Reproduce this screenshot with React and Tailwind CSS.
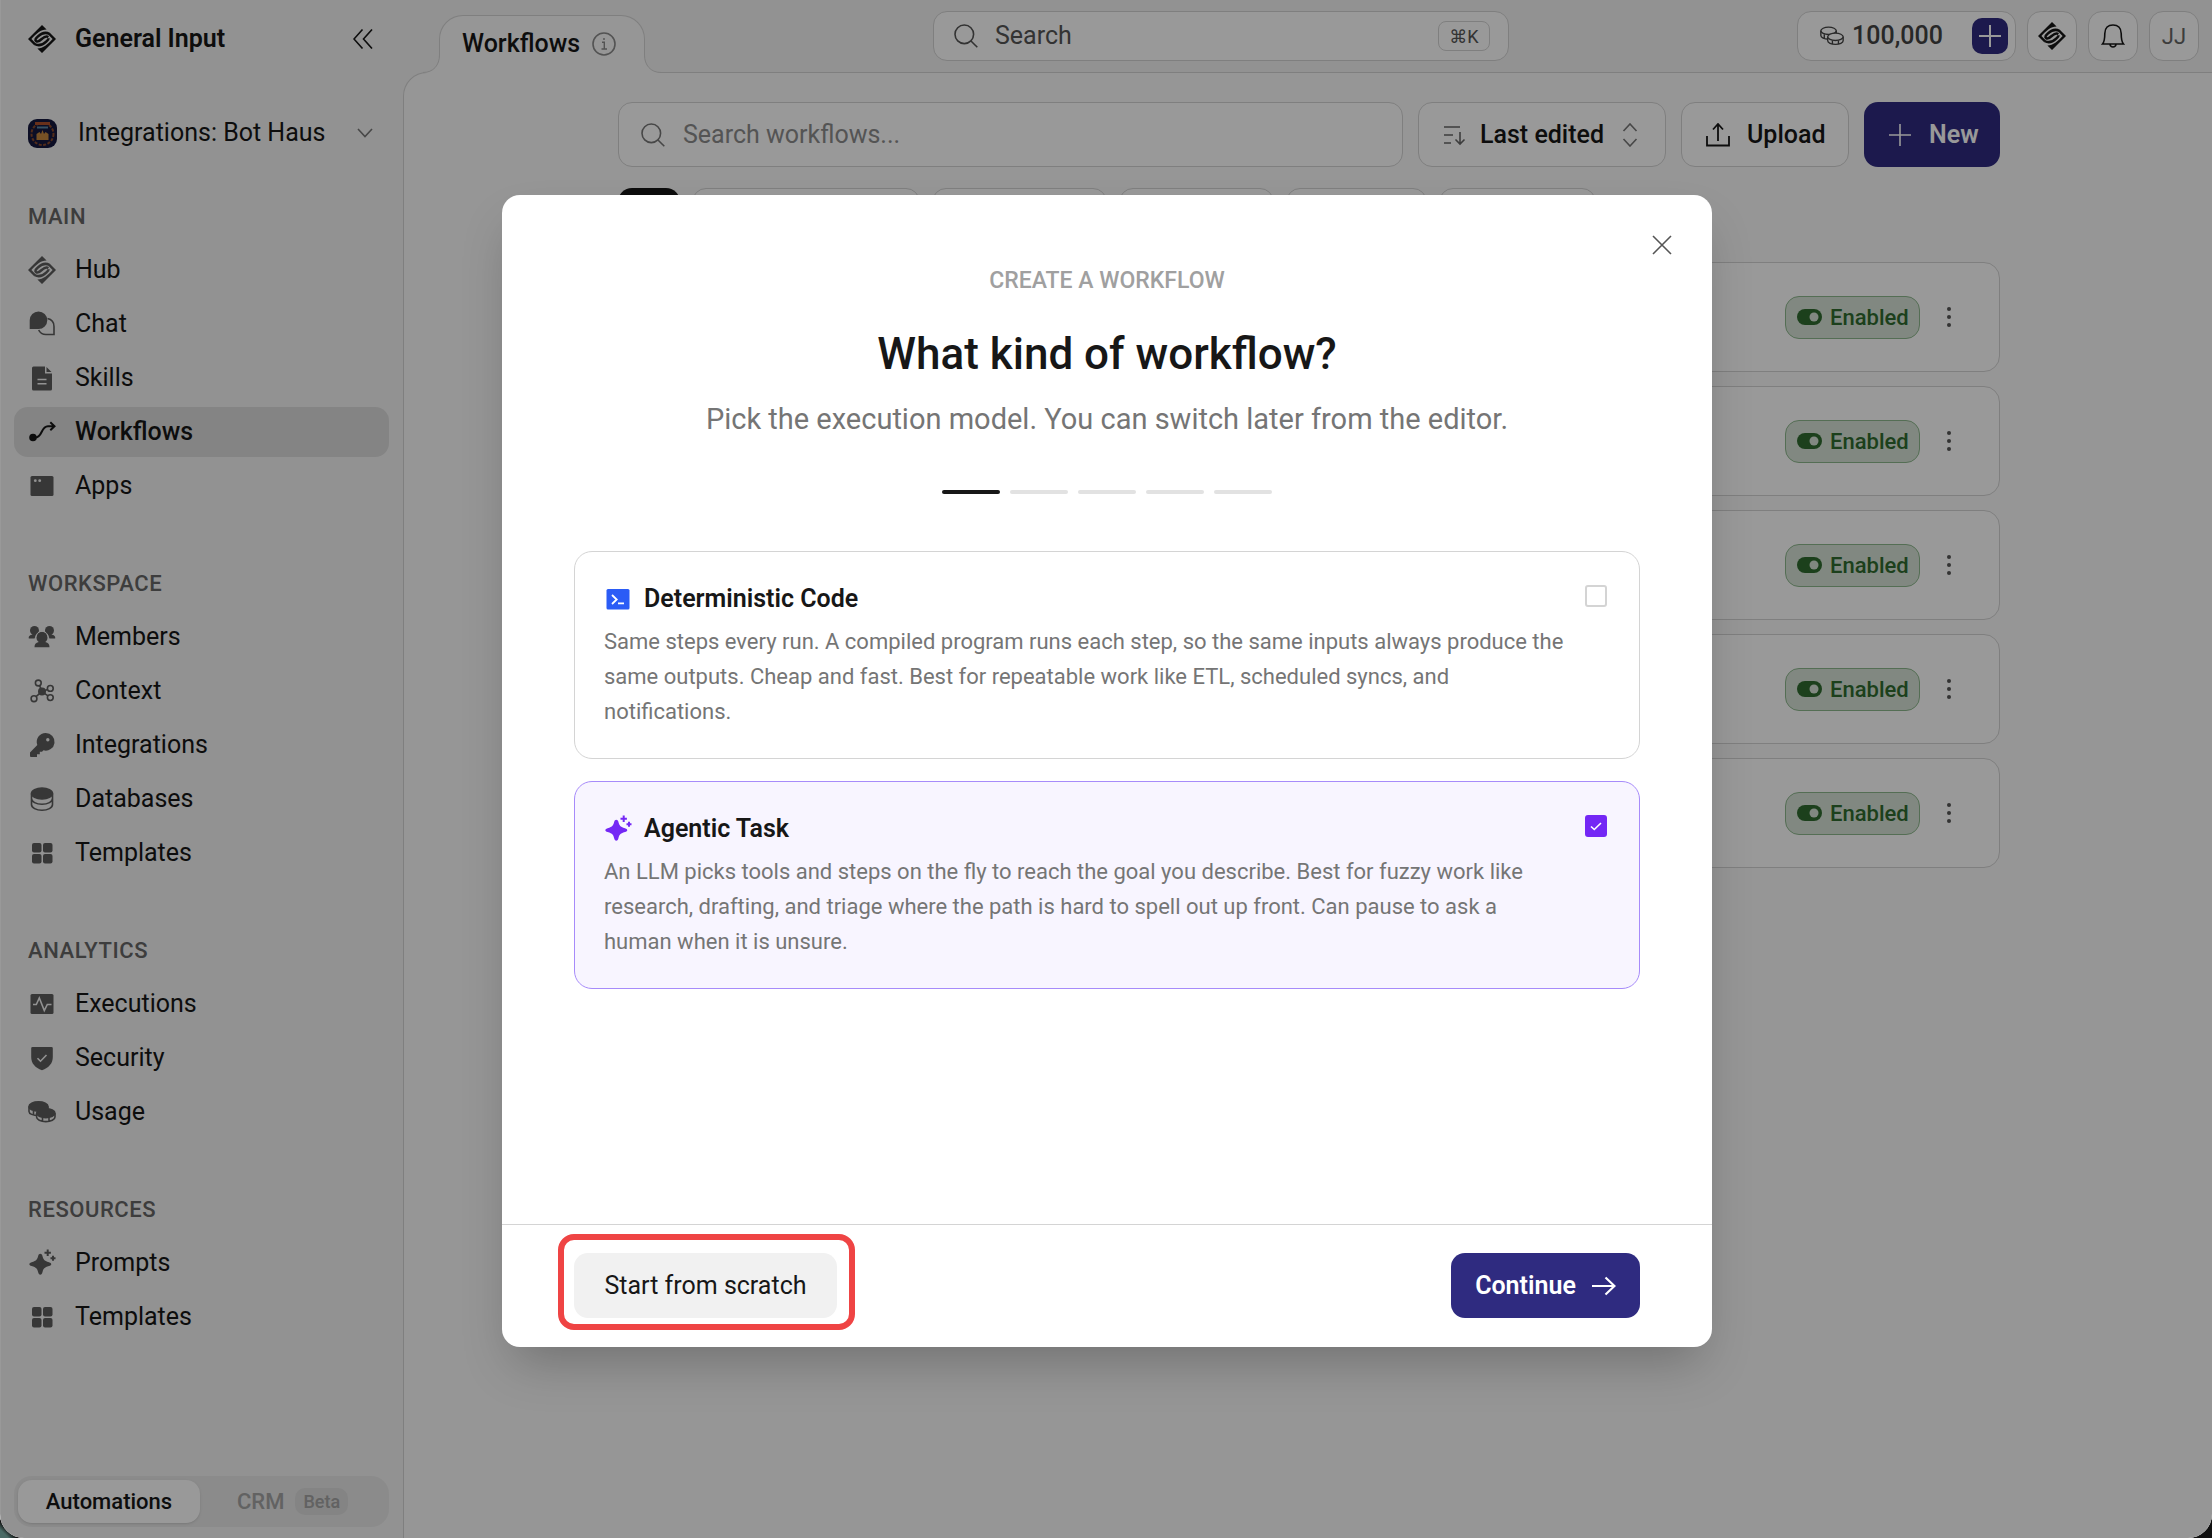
import { useState } from 'react';

function Icon({ children, className = 'size-7', box = 28 }) {
  return (
    <svg
      viewBox={`0 0 ${box} ${box}`}
      className={`shrink-0 ${className}`}
      fill="none"
      stroke="currentColor"
      strokeWidth="1.6"
      aria-hidden="true"
    >
      {children}
    </svg>
  );
}

function LogoIcon({ className }) {
  return (
    <Icon className={className}>
      <g fill="currentColor" stroke="none">
        <path d="M14 0l4.6 4.5C12.6 4.6 8.4 8.6 3.4 14l4.2 4.3-1.4 1.9L0 14z" />
        <path d="M14 28l-4.6-4.5C15.4 23.4 19.6 19.4 24.6 14l-4.2-4.3 1.4-1.9L28 14z" />
      </g>
      <g strokeWidth="2.5">
        <path d="M21.6 9c-4.2-2.3-8.2-.8-11.6 2.4-2.6 2.4-3.3 3.8-1.8 4.8 2 1.3 4-.7 6-2.6s4-3 6.2-1.6" />
        <path d="M6.6 19c4.2 2.3 8.2.8 11.6-2.4 1.4-1.3 2.4-2.3 2.4-3.4" />
      </g>
    </Icon>
  );
}

function ChatIcon() {
  return (
    <Icon>
      <path fill="currentColor" d="M2.5 18.3v-8A8 8 0 1 1 10.5 18.3z" />
      <path d="M19.5 8.5c4 .8 6.5 4 6.5 8v8h-8c-3.5 0-6-1.6-7.3-4.5" />
    </Icon>
  );
}

function SkillsIcon() {
  return (
    <Icon>
      <path fill="currentColor" stroke="none" d="M5.5 2.5H17v7h7V25a1.5 1.5 0 0 1-1.5 1.5h-17A1.5 1.5 0 0 1 4 25V4a1.5 1.5 0 0 1 1.5-1.5zM18.5 3l5 5h-5z" />
      <path stroke="#f3f3f3" d="M9.5 15.5h9M9.5 19.7h9" />
    </Icon>
  );
}

function WorkflowIcon() {
  return (
    <Icon>
      <circle cx="5" cy="19.5" r="3" fill="currentColor" />
      <path strokeWidth="2" d="M7 19.5c8 0 5.500-11.300 13-11.300h6M22.300 4.200l4.200 4-4.200 4" />
    </Icon>
  );
}

function AppsIcon() {
  return (
    <Icon>
      <rect x="2.5" y="4" width="23" height="20" rx="1.5" fill="currentColor" stroke="none" />
      <circle cx="7.3" cy="8.7" r="1.4" fill="#f3f3f3" stroke="none" />
      <circle cx="11.7" cy="8.7" r="1.4" fill="#f3f3f3" stroke="none" />
    </Icon>
  );
}

function MembersIcon() {
  return (
    <Icon>
      <g fill="currentColor" stroke="none">
        <circle cx="6.5" cy="7.5" r="4.5" />
        <circle cx="21.5" cy="7.5" r="4.5" />
        <path d="M4.500 9h5l-3 6.600H.8c-.4-2.600 1.500-3.500 3.700-4zM23.500 9h-5l3 6.600h5.700c.4-2.600-1.500-3.500-3.700-4z" />
        <path d="M14 8.800a5.800 5.800 0 0 1 3.300 10.300c3 .8 4.200 2.200 4.200 5.200h-15c0-3 1.200-4.400 4.200-5.200A5.800 5.800 0 0 1 14 8.800z" />
      </g>
      <circle cx="14" cy="14.600" r="6.300" stroke="#f3f3f3" strokeWidth="1" strokeDasharray="19 40" strokeDashoffset="-20" />
    </Icon>
  );
}

function ContextIcon() {
  return (
    <Icon>
      <circle cx="14" cy="14.5" r="3.2" fill="currentColor" />
      <circle cx="10.3" cy="6" r="2.9" />
      <circle cx="22.3" cy="11.4" r="2.9" />
      <circle cx="22.3" cy="20.6" r="2.9" />
      <circle cx="6" cy="21.7" r="2.9" />
      <path d="M11.5 8.7l1.7 3.5M17 13.500l2.500-1M16.500 16.300l3.500 2.500M11.500 16.700L8 19.700" />
    </Icon>
  );
}

function KeyIcon() {
  return (
    <Icon>
      <path fill="currentColor" stroke="none" d="M17.700 2A8.800 8.800 0 1 1 15.500 19.300L14 20.700h-2.200v2.600H9V26H3.300c-.8 0-1.300-.5-1.300-1.300v-3.200L9.300 14A8.800 8.800 0 0 1 17.700 2z" />
      <circle cx="19.800" cy="8.700" r="1.700" fill="#f3f3f3" stroke="none" />
    </Icon>
  );
}

function DatabaseIcon() {
  return (
    <Icon>
      <ellipse cx="14" cy="8.5" rx="10.5" ry="5.500" fill="currentColor" />
      <path d="M3.500 8.500v11c0 3.300 4.700 5.800 10.500 5.800s10.500-2.500 10.500-5.800v-11M3.500 13.500c0 3.300 4.700 5.800 10.500 5.800s10.500-2.500 10.500-5.800" />
    </Icon>
  );
}

function TemplatesIcon() {
  return (
    <Icon>
      <g fill="currentColor" stroke="none">
        <rect x="4" y="4" width="9.500" height="9.500" rx="2" />
        <rect x="15" y="4" width="9.500" height="9.500" rx="2" />
        <rect x="4" y="15" width="9.500" height="9.500" rx="2" />
        <rect x="15" y="15" width="9.500" height="9.500" rx="2" />
      </g>
    </Icon>
  );
}

function ExecutionsIcon() {
  return (
    <Icon>
      <rect x="2.5" y="4" width="23" height="20" rx="1.5" fill="currentColor" stroke="none" />
      <path stroke="#f3f3f3" d="M5 14.500h3.300l3-6.500 5 12.500 3-6h4.200" />
    </Icon>
  );
}

function SecurityIcon() {
  return (
    <Icon>
      <path fill="currentColor" stroke="none" d="M4.500 3h19a1.300 1.300 0 0 1 1.300 1.300V13c0 6.500-4 10.700-10.800 13.300C7.200 23.700 3.200 19.500 3.200 13V4.300A1.300 1.300 0 0 1 4.500 3z" />
      <path stroke="#f3f3f3" d="M9.500 14.200l3 3 6-6.200" />
    </Icon>
  );
}

function UsageIcon() {
  return (
    <Icon>
      <path fill="#f3f3f3" d="M1 8.500v5c0 2.300 4 4 9.500 4s9.500-1.700 9.500-4v-5M5.500 13v3.500M11 13.500V17" />
      <ellipse cx="10.500" cy="8.500" rx="9.500" ry="4.700" fill="currentColor" />
      <path fill="#f3f3f3" d="M8.600 15.200v3.800c0 2.500 4 4.600 9.200 4.600s9.200-2 9.200-4.600v-3.800M14.500 20v3.200M21 20v3.200" />
      <ellipse cx="17.800" cy="15.200" rx="9.200" ry="4.400" fill="currentColor" />
    </Icon>
  );
}

function CoinsIcon() {
  return (
    <Icon className="size-6">
      <path d="M1 8v5.500c0 2.400 4 4.300 9 4.300M5 12v5M10.500 12.500V17M1 8v2" />
      <ellipse cx="10" cy="8" rx="9" ry="4.300" />
      <path d="M19 8v3" />
      <path fill="#fff" d="M9 15v4.500c0 2.400 4 4.300 9 4.300s9-1.900 9-4.300V15" />
      <path d="M14.500 19v4.300M21.500 19v4.300" />
      <ellipse cx="18" cy="15" rx="9" ry="4.300" fill="#fff" />
    </Icon>
  );
}

function SparkleIcon({ className }) {
  return (
    <Icon className={className}>
      <path fill="currentColor" stroke="none" d="M12.300 4.800c1 0 1.700.7 2 1.700 1 3.700 1.500 5.200 6.700 6.700 3 .9 3 3 0 3.900-5.200 1.500-5.700 3-6.700 6.700-.6 2.600-3.400 2.600-4 0-1-3.700-1.500-5.200-6.700-6.700-3-.9-3-3 0-3.900 5.200-1.500 5.700-3 6.700-6.700.3-1 1-1.700 2-1.700z" />
      <path strokeWidth="2" d="M19.700.5v6.400M16.500 3.700h6.400M25 6.700v5M22.500 9.200h5" />
    </Icon>
  );
}

function SearchIcon({ className }) {
  return (
    <Icon className={className} box={24}>
      <circle cx="10.3" cy="10.3" r="9.3" />
      <path d="M17 17l6.300 6.300" />
    </Icon>
  );
}

const sections = [
  {
    title: 'MAIN',
    items: [
      { label: 'Hub', icon: LogoIcon },
      { label: 'Chat', icon: ChatIcon },
      { label: 'Skills', icon: SkillsIcon },
      { label: 'Workflows', icon: WorkflowIcon, active: true },
      { label: 'Apps', icon: AppsIcon }
    ]
  },
  {
    title: 'WORKSPACE',
    items: [
      { label: 'Members', icon: MembersIcon },
      { label: 'Context', icon: ContextIcon },
      { label: 'Integrations', icon: KeyIcon },
      { label: 'Databases', icon: DatabaseIcon },
      { label: 'Templates', icon: TemplatesIcon }
    ]
  },
  {
    title: 'ANALYTICS',
    items: [
      { label: 'Executions', icon: ExecutionsIcon },
      { label: 'Security', icon: SecurityIcon },
      { label: 'Usage', icon: UsageIcon }
    ]
  },
  {
    title: 'RESOURCES',
    items: [
      { label: 'Prompts', icon: SparkleIcon },
      { label: 'Templates', icon: TemplatesIcon }
    ]
  }
];

function Sidebar() {
  return (
    <aside className="flex w-[403px] shrink-0 flex-col border-l border-white bg-[#f3f3f3] pr-[14px] pb-[11px] pl-[13px]">
      <div className="flex h-[78px] items-center pr-4 pl-[14px]">
        <LogoIcon className="size-7" />
        <span className="ml-[19px] flex-1 text-[25px] font-semibold">General Input</span>
        <button type="button" aria-label="Collapse sidebar">
          <Icon className="size-5" box={20}>
            <path d="M9.5.5L1 10l8.500 9.500M19 .5L10.500 10l8.500 9.500" />
          </Icon>
        </button>
      </div>

      <button type="button" className="mt-[30px] flex h-[50px] items-center pr-4 pl-[14px] text-left">
        <svg viewBox="0 0 29 29" className="size-[29px] shrink-0" aria-hidden="true">
          <rect width="29" height="29" rx="9" fill="#15183f" />
          <circle cx="14.5" cy="15" r="11" fill="none" stroke="#8a4a2c" strokeWidth="2" strokeDasharray="3 1.5" />
          <path d="M7 4.500h15" stroke="#b0502c" strokeWidth="3" />
          <path d="M9 8.500h11" stroke="#5d86a5" strokeWidth="2" />
          <path d="M8.500 21v-6l3-2 1.500 2 1.500-4 1.500 4 1.500-2 3 2v6z" fill="#c5873e" />
        </svg>
        <span className="ml-[21px] flex-1 text-[25px]">Integrations: Bot Haus</span>
        <Icon className="size-4 text-[#777]" box={16}>
          <path d="M1 4l7 7.500L15 4" />
        </Icon>
      </button>

      <nav className="mt-[33px] flex flex-1 flex-col gap-[47px]">
        {sections.map(section => (
          <div key={section.title} className="flex flex-col gap-1">
            <h2 className="flex h-[50px] items-center pl-[14px] text-[22px] font-medium tracking-wide text-[#666]">
              {section.title}
            </h2>
            {section.items.map(item => (
              <a
                key={item.label}
                href="#"
                className={`flex h-[50px] items-center gap-[19px] rounded-[14px] pl-[14px] text-[25px] ${
                  item.active ? 'bg-[#dcdcdc] font-medium' : ''
                }`}
              >
                <span className={item.active ? '' : 'text-[#5d5d5d]'}>
                  <item.icon />
                </span>
                {item.label}
              </a>
            ))}
          </div>
        ))}
      </nav>

      <div className="flex h-[51px] rounded-[18px] bg-[#e8e8e8] p-1 text-[22px]">
        <button type="button" className="w-[182px] rounded-[14px] bg-white font-medium shadow-sm">
          Automations
        </button>
        <button type="button" className="flex flex-1 items-center justify-center gap-[11px] font-medium text-[#a3a3a3]">
          CRM
          <span className="rounded-[10px] bg-[#dcdcdc] px-2 text-[18px] leading-[27px]">Beta</span>
        </button>
      </div>
    </aside>
  );
}

function Header() {
  return (
    <header className="flex h-[72px] pr-[13px]">
      <div className="relative z-10 mt-[15px] -mb-px ml-9 flex w-[206px] items-center gap-[12px] rounded-t-[24px] border border-b-0 border-[#d4d4d4] bg-[#fafafa] pb-[2px] pl-[22px]">
        <h1 className="text-[25px] font-medium">Workflows</h1>
        <Icon className="size-6 text-[#8a8a8a]" box={24}>
          <circle cx="12" cy="12" r="11" />
          <path d="M10 10.300h2.300V17M9.500 17h5.500M12 6v2" strokeWidth="1.400" />
        </Icon>
        <svg viewBox="0 0 18 18" className="absolute -left-[17px] bottom-0 size-[18px]" aria-hidden="true">
          <path d="M16.500 0c0 10-6 17.500-16.500 17.500V18h18V0z" fill="#fafafa" />
          <path d="M16.500 0c0 10-6 17.500-16.500 17.500" fill="none" stroke="#d4d4d4" />
        </svg>
        <svg viewBox="0 0 18 18" className="absolute -right-[17px] bottom-0 size-[18px]" aria-hidden="true">
          <path d="M1.500 0c0 10 6 17.500 16.500 17.500V18H0V0z" fill="#fafafa" />
          <path d="M1.500 0c0 10 6 17.500 16.500 17.500" fill="none" stroke="#d4d4d4" />
        </svg>
      </div>

      <div className="flex flex-1 justify-center pt-[11px]">
        <button
          type="button"
          className="flex h-[50px] w-[576px] items-center rounded-[14px] border border-[#d4d4d4] bg-white pr-[18px] pl-5 text-[25px] text-[#555]"
        >
          <SearchIcon className="size-6" />
          <span className="ml-[17px] flex-1 text-left">Search</span>
          <kbd className="flex h-[30px] w-[52px] items-center justify-center rounded-lg border border-[#d4d4d4] font-[Roboto,'DejaVu_Sans',sans-serif] text-[18px]">
            ⌘K
          </kbd>
        </button>
      </div>

      <div className="flex gap-[11px] pt-[11px]">
        <div className="flex h-[50px] w-[219px] items-center rounded-[14px] border border-[#d4d4d4] bg-white pr-[7px] pl-[22px] text-[#444]">
          <CoinsIcon />
          <span className="ml-2 flex-1 text-[25px] font-medium">100,000</span>
          <button type="button" aria-label="Add credits" className="flex size-9 items-center justify-center rounded-[10px] bg-[#2f2b80] text-white">
            <Icon className="size-6" box={24}>
              <path strokeWidth="2" d="M12 1v22M1 12h22" />
            </Icon>
          </button>
        </div>
        <button type="button" aria-label="Hub" className="flex size-[50px] items-center justify-center rounded-[14px] border border-[#d4d4d4] bg-white">
          <LogoIcon className="size-7" />
        </button>
        <button type="button" aria-label="Notifications" className="flex size-[50px] items-center justify-center rounded-[14px] border border-[#d4d4d4] bg-white">
          <Icon className="size-6" box={24}>
            <path d="M1.500 20c1.800-2 2.300-4.500 2.300-10.500C3.800 4 7.200 1 12 1s8.200 3 8.200 8.500c0 6 .5 8.500 2.300 10.500zM9 20.500c.5 3.300 5.500 3.300 6 0" />
          </Icon>
        </button>
        <button type="button" className="flex size-[50px] items-center justify-center rounded-[14px] border border-[#d4d4d4] bg-white text-[22px] text-[#666]">
          JJ
        </button>
      </div>
    </header>
  );
}

const cards = [1, 2, 3, 4, 5];

function WorkflowList() {
  return (
    <div className="mx-auto w-full max-w-[1382px] pt-[29px]">
      <div className="flex h-[65px] gap-[15px] text-[25px]">
        <label className="flex flex-1 items-center gap-[18px] rounded-[14px] border border-[#d4d4d4] bg-white px-[22px]">
          <SearchIcon className="size-6 text-[#777]" />
          <input type="text" aria-label="Search workflows" placeholder="Search workflows..." className="min-w-0 flex-1 outline-none placeholder:text-[#8c8c8c]" />
        </label>
        <label className="flex w-[248px] items-center rounded-[14px] border border-[#d4d4d4] bg-white pl-[25px] font-medium">
          <Icon className="size-[22px] text-[#666]" box={22}>
            <path d="M0 3h16M0 11h9M0 19h7M16 8v12M11.500 15.500L16 20l4.500-4.500" />
          </Icon>
          <select aria-label="Sort by" className="ml-[14px] w-[130px] appearance-none outline-none">
            <option>Last edited</option>
          </select>
          <Icon className="ml-2 size-6 text-[#777]" box={24}>
            <path d="M5.500 8L12 1l6.500 7M5.500 16l6.500 7 6.500-7" />
          </Icon>
        </label>
        <button type="button" className="flex w-[168px] items-center gap-[17px] rounded-[14px] border border-[#d4d4d4] bg-white pl-6 font-medium">
          <Icon className="size-6" box={24}>
            <path strokeWidth="1.8" d="M1 13v9.500h22V13M12 18V1M7 6.500L12 1l5 5.500" />
          </Icon>
          Upload
        </button>
        <button type="button" className="flex w-[136px] items-center gap-[18px] rounded-[14px] bg-[#2f2b80] pl-[25px] font-semibold text-white">
          <Icon className="size-[22px]" box={22}>
            <path d="M11 0v22M0 11h22" />
          </Icon>
          New
        </button>
      </div>

      <div className="mt-[21px] flex h-12 gap-3">
        <span className="w-[62px] rounded-[14px] bg-[#171717]" />
        <span className="w-[228px] rounded-[14px] border border-[#d4d4d4] bg-white" />
        <span className="w-[175px] rounded-[14px] border border-[#d4d4d4] bg-white" />
        <span className="w-[155px] rounded-[14px] border border-[#d4d4d4] bg-white" />
        <span className="w-[141px] rounded-[14px] border border-[#d4d4d4] bg-white" />
        <span className="w-[157px] rounded-[14px] border border-[#d4d4d4] bg-white" />
      </div>

      <ul className="mt-[26px] flex flex-col gap-[14px]">
        {cards.map(id => (
          <li key={id} className="flex h-[110px] items-center justify-end rounded-[16px] border border-[#d4d4d4] bg-white pr-[38px]">
            <span className="flex h-[43px] w-[135px] items-center gap-2 rounded-[14px] border border-[#8db88d] bg-[#d7e3d7] pl-[11px] text-[22px] font-medium text-[#2f6b2f]">
              <svg viewBox="0 0 25 16" className="h-4 w-[25px] shrink-0" aria-hidden="true">
                <rect width="25" height="16" rx="8" fill="currentColor" />
                <circle cx="17" cy="8" r="4.500" fill="#d7e3d7" />
              </svg>
              Enabled
            </span>
            <button type="button" aria-label="More actions" className="ml-[17px] flex h-10 w-6 flex-col items-center justify-center gap-1">
              <span className="size-1 rounded-full bg-[#555]" />
              <span className="size-1 rounded-full bg-[#555]" />
              <span className="size-1 rounded-full bg-[#555]" />
            </button>
          </li>
        ))}
      </ul>
    </div>
  );
}

function OptionCard({ title, icon, checked, onChange, children }) {
  return (
    <label
      className={`flex min-h-[208px] items-start justify-between rounded-[18px] border pt-[30px] pr-8 pl-[29px] ${
        checked ? 'border-[#a78bfa] bg-[#f8f5ff]' : 'border-[#d4d4d4] bg-white'
      }`}
    >
      <span className="w-[962px]">
        <span className="flex h-[34px] items-center gap-3 text-[25px] font-semibold">
          {icon}
          {title}
        </span>
        <span className="mt-2 block text-[22px] leading-[35px] text-[#757575]">{children}</span>
      </span>
      <span className="relative mt-[3px] size-[22px]">
        <input
          type="checkbox"
          checked={checked}
          onChange={onChange}
          className="block size-[22px] appearance-none rounded-[3px] border-2 border-[#d4d4d4] bg-white checked:border-[#7427f5] checked:bg-[#7427f5]"
        />
        {checked && (
          <svg viewBox="0 0 22 22" className="pointer-events-none absolute inset-0" fill="none" stroke="#fff" strokeWidth="1.6" aria-hidden="true">
            <path d="M6 11.500l3.300 3L16 8" />
          </svg>
        )}
      </span>
    </label>
  );
}

function CreateDialog() {
  const [kind, setKind] = useState('agentic');

  return (
    <div
      role="dialog"
      aria-label="Create a workflow"
      className="relative flex min-h-[1152px] w-[1210px] flex-col rounded-[18px] bg-white shadow-2xl"
    >
      <button type="button" aria-label="Close" className="absolute top-10 right-10 flex size-5 items-center justify-center text-[#555]">
        <Icon className="size-5" box={20}>
          <path d="M1 1l18 18M19 1L1 19" />
        </Icon>
      </button>

      <div className="flex flex-1 flex-col px-[72px] pt-[71px]">
        <p className="text-center text-[23px] leading-[30px] font-medium text-[#a0a0a0]">CREATE A WORKFLOW</p>
        <h2 className="mt-[30px] text-center text-[44px] leading-[56px] font-medium">What kind of workflow?</h2>
        <p className="mt-[19px] text-center text-[29px] leading-[36px] text-[#757575]">
          Pick the execution model. You can switch later from the editor.
        </p>
        <div className="mt-[53px] flex justify-center gap-[10px]">
          <span className="h-1 w-[58px] rounded-full bg-[#171717]" />
          <span className="h-1 w-[58px] rounded-full bg-[#e2e2e2]" />
          <span className="h-1 w-[58px] rounded-full bg-[#e2e2e2]" />
          <span className="h-1 w-[58px] rounded-full bg-[#e2e2e2]" />
          <span className="h-1 w-[58px] rounded-full bg-[#e2e2e2]" />
        </div>

        <div className="mt-[57px] flex flex-col gap-[22px]">
          <OptionCard
            title="Deterministic Code"
            checked={kind === 'code'}
            onChange={() => setKind('code')}
            icon={
              <svg viewBox="0 0 28 28" className="size-7 shrink-0" fill="none" aria-hidden="true">
                <rect x="2.5" y="4" width="23" height="20.500" rx="1.5" fill="#2b5cf6" />
                <path d="M8 10l4.700 4.500L8 19M14 18.300h6" stroke="#fff" strokeWidth="1.8" />
              </svg>
            }
          >
            Same steps every run. A compiled program runs each step, so the same inputs always produce the
            same outputs. Cheap and fast. Best for repeatable work like ETL, scheduled syncs, and
            notifications.
          </OptionCard>
          <OptionCard
            title="Agentic Task"
            checked={kind === 'agentic'}
            onChange={() => setKind('agentic')}
            icon={<SparkleIcon className="size-7 text-[#7427f5]" />}
          >
            An LLM picks tools and steps on the fly to reach the goal you describe. Best for fuzzy work like
            research, drafting, and triage where the path is hard to spell out up front. Can pause to ask a
            human when it is unsure.
          </OptionCard>
        </div>
      </div>

      <div className="flex items-end justify-between border-t border-[#d4d4d4] pt-[9px] pr-[72px] pb-[17px] pl-14 text-[25px]">
        <div className="rounded-[16px] border-6 border-[#ef4444] pt-[13px] pr-3 pb-[6px] pl-[10px]">
          <button type="button" className="block h-[65px] w-[263px] rounded-[14px] bg-[#f1f1f1]">
            Start from scratch
          </button>
        </div>
        <button type="button" className="mb-3 flex h-[65px] w-[189px] items-center justify-center gap-4 rounded-[14px] bg-[#2f2b80] font-semibold text-white">
          Continue
          <Icon className="size-6" box={24}>
            <path strokeWidth="2.2" d="M0 12h22M13.500 3.500L22.500 12l-9 8.500" />
          </Icon>
        </button>
      </div>
    </div>
  );
}

export default function App() {
  return (
    <div className="bg-[linear-gradient(45deg,#4a6b66_6px,#111_12px)] font-[Roboto,'Liberation_Sans',sans-serif] text-[#171717]">
      <div className="relative flex min-h-screen overflow-hidden rounded-b-[24px] bg-[#f3f3f3]">
        <Sidebar />
        <div className="flex min-w-0 flex-1 flex-col">
          <Header />
          <main className="flex-1 rounded-tl-[24px] border-t border-l border-[#d4d4d4] bg-[#fafafa] pl-0.5">
            <WorkflowList />
          </main>
        </div>
        <div className="absolute inset-0 z-20 flex items-center justify-center bg-black/40 pt-1 pl-0.5">
          <CreateDialog />
        </div>
      </div>
    </div>
  );
}
